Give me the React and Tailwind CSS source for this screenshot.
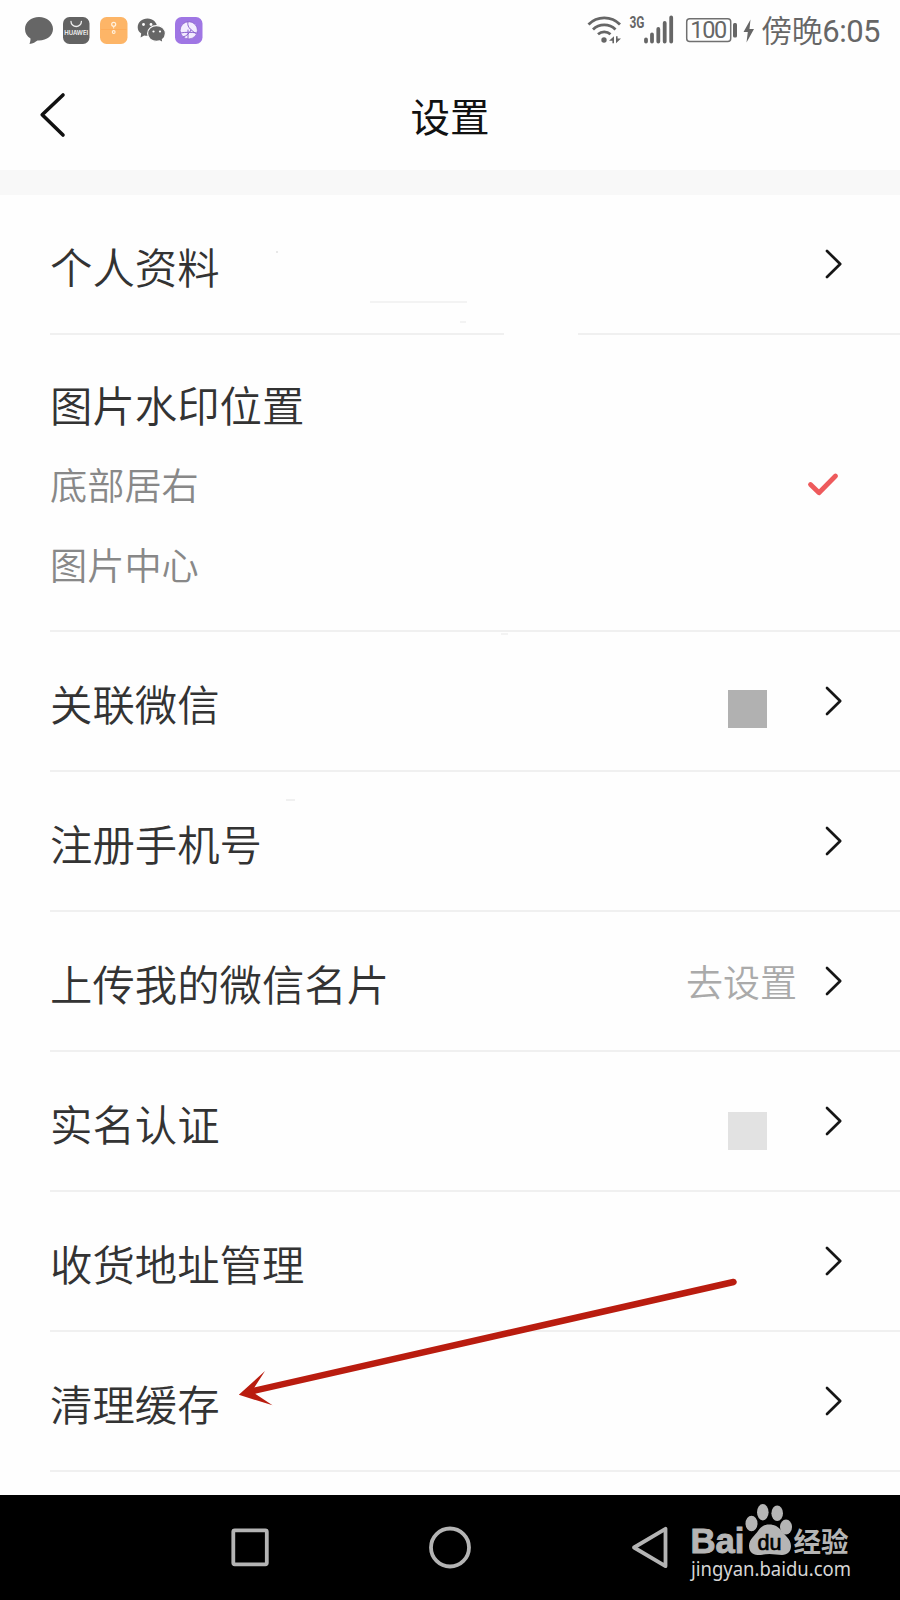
const stroke = { fill: "none", strokeLinecap: "round", strokeLinejoin: "round" };

function StatusBar() {
  return (
    <div className="flex h-[60px] items-start pl-[25px] pr-[20px] font-normal text-[#666]">
      <svg className="mt-[15px] h-[32px] w-[180px]" viewBox="25 15 180 32">
        <path d="M39 17c-8 0-14 5-14 12 0 4 2 7.500 5.500 9.500 0 2-.3 3.500-1 5.500 3.500-.5 6-2 8-3.500H39c8 0 14-5 14-11.500S47 17 39 17z" fill="#666" />
        <rect x="63" y="17" width="26.500" height="27" rx="6.500" fill="#636363" />
        <path d="M71 21.500a5.200 5 0 0 0 10.400 0" {...stroke} stroke="#eee" strokeWidth="1.300" />
        <text x="76.200" y="34.700" textAnchor="middle" fontSize="5.700" fontWeight="600" fill="#f4f4f4" textLength="24" lengthAdjust="spacingAndGlyphs" fontFamily="Inter, sans-serif">HUAWEI</text>
        <rect x="100" y="17" width="27.500" height="27" rx="6.500" fill="#fdb567" />
        <path d="M101 29.500h25.500" stroke="#fdaa55" strokeWidth=".8" />
        <circle cx="113.700" cy="24.300" r="2" fill="none" stroke="#fff1de" strokeWidth="1.200" />
        <path d="M113.700 26.500v2" stroke="#fff1de" strokeWidth="1" />
        <circle cx="113.700" cy="32" r="1.400" fill="none" stroke="#fff1de" strokeWidth="1.100" />
        <path d="M147.500 18.500c-5.500 0-9.800 3.900-9.800 8.700 0 2.800 1.300 4.800 3.500 6.400l-.6 4 3.600-2.200c1 .3 2.200.4 3.300.4 5.500 0 9.600-3.900 9.600-8.600s-4.200-8.700-9.600-8.700z" fill="#666" />
        <path d="M156.500 25.600c-5 0-8.900 3.500-8.900 7.900s3.900 7.900 8.900 7.900c1.200 0 2.200-.2 3.200-.5l3.300 1.900-.6-3.300c2-1.500 3-3.500 3-6 0-4.400-3.900-7.900-8.900-7.900z" fill="#666" stroke="#fff" strokeWidth="1.200" />
        <g fill="#fff"><circle cx="143.500" cy="24.500" r="1.400" /><circle cx="151" cy="24.500" r="1.400" /><circle cx="153.500" cy="31.500" r="1.100" /><circle cx="160" cy="31.500" r="1.100" /></g>
        <rect x="175" y="17" width="27.500" height="27" rx="6.500" fill="#9f76e4" />
        <circle cx="188.800" cy="30.300" r="8.600" fill="#f3ecff" stroke="#7d59c0" strokeWidth=".6" />
        <path d="M188 22c-1 4 1 7 8 11.500M180.500 33c5-1 11-1 16 0M191 30c-1.500 3-4 6-8 7M188 30v8.500" {...stroke} stroke="#8a63cf" strokeWidth="1" />
      </svg>
      <svg className="ml-auto mt-[12px] h-[36px] w-[168px]" viewBox="588 12 168 36">
        <g {...stroke} strokeLinecap="butt" stroke="#666" strokeWidth="2.800">
          <path d="M589.500 24.500a22 22 0 0 1 31.500 0" />
          <path d="M594 29.500a16 16 0 0 1 22.500 0" />
          <path d="M599 34.300a9.500 9.500 0 0 1 12.500 0" />
        </g>
        <circle cx="605" cy="40" r="2.700" fill="#666" />
        <path d="M610 40.800l5-4.600v7h-1.600v-2.400zM617 36.200v7l5-4.600h-3.400v-2.400z" fill="#666" />
        <text x="630.500" y="27.500" fontSize="16" fontWeight="700" fill="#666" textLength="15" lengthAdjust="spacingAndGlyphs" fontFamily="Roboto, sans-serif">3G</text>
        <path d="M647 39.500v2M653 34.500v7M659.300 29v12.500M665.700 23v18.500M672.200 17.500v24" {...stroke} stroke="#666" strokeWidth="3.800" />
        <rect x="687.700" y="18.700" width="44" height="22.800" rx="3" fill="none" stroke="#707070" strokeWidth="1.500" />
        <text x="709.800" y="38.300" textAnchor="middle" fontSize="23.500" fill="#666" textLength="37" fontFamily="Roboto, sans-serif">100</text>
        <rect x="734" y="23" width="4" height="14.500" rx="1.500" fill="#666" />
        <path d="M751.500 19.500l-7 12.500h4.300l-1.300 10.500 7.500-13.500h-4.500z" fill="#666" />
      </svg>
      <span className="ml-[6px] mt-[10px] whitespace-nowrap font-[Roboto,'Noto_Sans_CJK_SC',sans-serif] text-[31px] leading-[44px] tracking-[-0.5px]"><span className="font-[350]">傍晚</span>6:05</span>
    </div>
  );
}

function Chevron() {
  return (
    <svg className="mr-[56px] h-[32px] w-[20px]" viewBox="0 0 20 32">
      <path d="M3 3L16.200 16 3 29" {...stroke} stroke="#161616" strokeWidth="2.700" />
    </svg>
  );
}

function Row({ label, children }) {
  return (
    <div className="ml-[50px] flex h-[140px] items-center border-b-2 border-[#f0f0f0]">
      <span className="mt-[3px] flex-1 text-[42.4px] leading-[60px] text-[#333]">{label}</span>
      {children}
      <Chevron />
    </div>
  );
}

function Watermark() {
  return (
    <svg className="absolute left-[686px] top-[1500px] h-[84px] w-[170px]" viewBox="686 1500 170 84" fontWeight="400">
      <g fill="#b5b5b5">
        <text x="690.500" y="1553" fontSize="35.500" fontWeight="700" stroke="#b5b5b5" strokeWidth="1" textLength="54" lengthAdjust="spacingAndGlyphs" fontFamily="Liberation Sans, sans-serif">Bai</text>
        <ellipse cx="751.500" cy="1523.500" rx="6" ry="7.800" />
        <ellipse cx="762.800" cy="1512.300" rx="5.800" ry="8.200" />
        <ellipse cx="777.200" cy="1513.300" rx="5.800" ry="7.800" />
        <ellipse cx="786" cy="1527" rx="6" ry="7.600" />
        <path d="M769 1524.500c-5.500 0-8.500 2.500-11 6.500-2.500 4-9 8-9 15 0 5.500 3.500 9 8.500 9 4 0 7.500-1 12-1s8 1 12.500 1c5.500 0 9-3.500 9-9 0-7-6.500-11-9.500-15-3-4-6-6.500-12.500-6.500z" />
        <text x="793.500" y="1551.500" fontSize="27.500" fontWeight="700" fontFamily="Noto Sans CJK SC, sans-serif">经验</text>
      </g>
      <text x="769.500" y="1550" textAnchor="middle" fontSize="21.500" fill="#000" stroke="#000" strokeWidth=".7" textLength="24" lengthAdjust="spacingAndGlyphs" fontFamily="Liberation Sans, sans-serif">du</text>
      <text x="691" y="1575.500" fontSize="20.500" fill="#d6d6d6" textLength="160" lengthAdjust="spacingAndGlyphs" fontFamily="Noto Sans, sans-serif">jingyan.baidu.com</text>
    </svg>
  );
}

export default function App() {
  return (
    <div className="relative flex h-[1600px] w-[900px] flex-col overflow-hidden bg-[#fefefe] font-['Noto_Sans_CJK_SC',sans-serif] font-[350]">
      <StatusBar />
      <header className="grid h-[110px] grid-cols-[1fr_auto_1fr] items-center">
        <svg className="ml-[36px] h-[48px] w-[32px]" viewBox="36 91 32 48">
          <path d="M63 95L42.200 114.800 63 135" {...stroke} stroke="#111" strokeWidth="3.600" />
        </svg>
        <h1 className="text-[39.5px] font-normal leading-[56px] text-[#111]">设置</h1>
      </header>
      <div className="h-[25px] bg-[#f8f8f8]" />
      <main className="flex h-[1300px] flex-col">
        <div className="ml-[50px] flex h-[138px] items-center">
          <span className="mt-[3px] flex-1 text-[42.4px] leading-[60px] text-[#333]">个人资料</span>
          <Chevron />
        </div>
        <div className="ml-[50px] flex h-[2px] gap-[74px]">
          <div className="w-[454px] bg-[#f0f0f0]" />
          <div className="flex-1 bg-[#f0f0f0]" />
        </div>
        <section className="ml-[50px] flex h-[297px] flex-col border-b-2 border-[#f0f0f0] pt-[39px]">
          <h2 className="text-[42.4px] leading-[60px] text-[#333]">图片水印位置</h2>
          <div className="mt-[11px] flex h-[80px] items-center text-[37.2px] text-[#888]">
            <span className="flex-1">底部居右</span>
            <svg className="mr-[60px] h-[28px] w-[34px]" viewBox="806 471 34 28">
              <path d="M810.500 484.500L819 492.800 835.500 476" {...stroke} stroke="#ee5a5c" strokeWidth="4.800" />
            </svg>
          </div>
          <div className="flex h-[80px] items-center text-[37.2px] text-[#888]">图片中心</div>
        </section>
        <Row label="关联微信"><div className="mr-[57px] mt-[16px] h-[38px] w-[39px] bg-[#b1b1b1]" /></Row>
        <Row label="注册手机号" />
        <Row label="上传我的微信名片"><span className="mr-[27px] text-[37px] leading-[54px] text-[#aaa]">去设置</span></Row>
        <Row label="实名认证"><div className="mr-[57px] mt-[19px] h-[38px] w-[39px] bg-[#e2e2e2]" /></Row>
        <Row label="收货地址管理" />
        <Row label="清理缓存" />
      </main>
      <nav className="flex h-[105px] items-center bg-black">
        <svg className="h-[105px] w-[700px]" viewBox="0 1495 700 105">
          <g {...stroke} stroke="#b4b4b4" strokeWidth="3.800">
            <rect x="233.300" y="1530.300" width="33.500" height="34" rx="1.500" />
            <circle cx="450" cy="1547.500" r="19" />
            <path d="M634 1547.500L665.500 1528.800V1566.200z" />
          </g>
        </svg>
      </nav>
      <div className="absolute left-[370px] top-[301px] h-[2px] w-[97px] bg-[#f3f3f3]" />
      <div className="absolute left-[460px] top-[321px] h-[2px] w-[6px] bg-[#f3f3f3]" />
      <div className="absolute left-[276px] top-[251px] h-[2px] w-[2px] bg-[#e8e8e8]" />
      <div className="absolute left-[501px] top-[633px] h-[2px] w-[7px] bg-[#f3f3f3]" />
      <div className="absolute left-[286px] top-[799px] h-[2px] w-[9px] bg-[#f0f0f0]" />
      <svg className="absolute left-[230px] top-[1270px] h-[145px] w-[520px]" viewBox="230 1270 520 145">
        <path d="M253 1391L733.500 1282" stroke="#b91c0f" strokeWidth="6.500" strokeLinecap="round" />
        <path d="M238.800 1394.800L265 1371 254 1388 255.500 1394 272.500 1405.300z" fill="#b91c0f" />
      </svg>
      <Watermark />
    </div>
  );
}
